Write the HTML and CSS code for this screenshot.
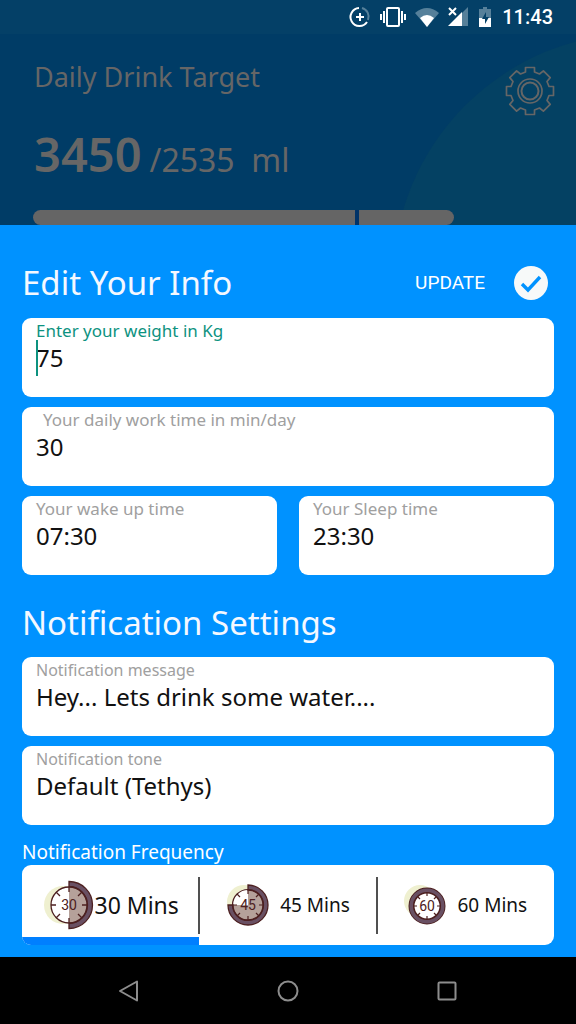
FILE: index.html
```html
<!DOCTYPE html>
<html lang="en">
<head>
<meta charset="utf-8">
<meta name="viewport" content="width=device-width, initial-scale=1">
<title>Edit Your Info</title>
<link rel="stylesheet" href="styles.css">
</head>
<body>
<div class="app">
  <section class="hero">
    <div class="statusbar">
      <svg width="22" height="22" viewBox="0 0 22 22" fill="none" stroke-width="2"><path d="M10 2A9 9 0 1 0 18 16" stroke="#fff"/><path d="M13 2A9 9 0 0 1 19 14" stroke="#56809a"/><path d="M11 7v8M7 11h8" stroke="#fff"/></svg>
      <svg width="26" height="22" viewBox="0 0 26 22" fill="none" stroke="#fff"><rect x="7" y="2" width="12" height="18" rx="1" stroke-width="2"/><path d="M4 5v12M22 5v12" stroke-width="2"/><path d="M1 8v6M25 8v6" stroke-width="2"/></svg>
      <svg width="24" height="22" viewBox="0 0 24 22"><path d="M0 7Q12-3 24 7L12 21z" fill="#56809a"/><path d="M5 12Q12 6 19 12L12 21z" fill="#fff"/></svg>
      <svg width="20" height="22" viewBox="0 0 20 22"><path d="M14 7l6-6v19h-6z" fill="#56809a"/><path d="M0 20L14 6v14z" fill="#fff"/><path d="M1 2l7 7M8 2L1 9" stroke="#fff" stroke-width="2"/></svg>
      <svg class="battery" width="12" height="22" viewBox="0 0 12 22"><path d="M0 3h4V1h4v2h4v9H0z" fill="#56809a"/><path d="M0 12h12v9H0z" fill="#fff"/><path d="M7 6l-4 7h3v5l4-7H7z" fill="#044067"/></svg>
      <time>11:43</time>
    </div>
    <div class="target">
      <div>
        <h2 class="target-title">Daily Drink Target</h2>
        <p class="amount"><strong>3450</strong><span>/2535&nbsp; ml</span></p>
      </div>
      <button class="settings" type="button" aria-label="Settings">
        <svg width="50" height="50" viewBox="-25 -25 50 50" fill="none" stroke="#666" stroke-width="1.7" stroke-linejoin="round"><path d="M-4.500-23.500H4.500V-19L9.500-17 13.400-20.200 20.200-13.400 17-9.500 19-4.500H23.500V4.500H19L17 9.500 20.200 13.400 13.400 20.200 9.500 17 4.500 19V23.500H-4.500V19L-9.500 17-13.400 20.200-20.200 13.400-17 9.500-19 4.500H-23.500V-4.500H-19L-17-9.500-20.200-13.400-13.400-20.200-9.500-17-4.500-19z"/><circle r="12"/><circle r="8.500" stroke-width="2"/></svg>
      </button>
    </div>
    <div class="progress"><span></span><span></span></div>
  </section>

  <main class="sheet">
    <header class="sheet-head">
      <h1>Edit Your Info</h1>
      <button class="update" type="button">
        <span>UPDATE</span>
        <svg width="34" height="34" viewBox="0 0 34 34"><circle cx="17" cy="17" r="17" fill="#f7f9f9"/><path d="M8 18l6 6L26 11" fill="none" stroke="#0092ff" stroke-width="3.4"/></svg>
      </button>
    </header>
    <div class="fields">
      <div class="field active"><label for="weight">Enter your weight in Kg</label><input id="weight" type="text" value="75"><i class="caret"></i></div>
      <div class="field"><label class="inset" for="work">Your daily work time in min/day</label><input id="work" type="text" value="30"></div>
      <div class="pair">
        <div class="field"><label for="wake">Your wake up time</label><input id="wake" type="text" value="07:30"></div>
        <div class="field"><label for="sleep">Your Sleep time</label><input id="sleep" type="text" value="23:30"></div>
      </div>
    </div>
    <h1 class="section">Notification Settings</h1>
    <div class="fields">
      <div class="field"><label for="message">Notification message</label><input id="message" type="text" value="Hey... Lets drink some water...."></div>
      <div class="field"><label for="tone">Notification tone</label><input id="tone" type="text" value="Default (Tethys)"></div>
    </div>
    <fieldset class="frequency">
      <legend>Notification Frequency</legend>
      <div class="options">
        <label class="option"><input type="radio" name="frequency" checked>
          <svg width="52" height="50" viewBox="0 0 52 50"><circle cx="20" cy="25" r="19" fill="#eff0d0"/><circle cx="26" cy="25" r="18" fill="#fff"/><path d="M26 7a18 18 0 0 1 0 36z" fill="#b5a19a"/><path d="M26 1.500a23.500 23.500 0 0 1 0 47v-5a18.500 18.500 0 0 0 0-37z" fill="#695063" stroke="#4d2020" stroke-width="1.300"/><g fill="none" stroke="#4d2020" stroke-width="1.300"><circle cx="26" cy="25" r="18"/><path d="M26 7v5M26 38v5M8 25h5M39 25h5M13 12l4 4M35 34l4 4M39 12l-4 4M17 34l-4 4"/></g><text x="26" y="30" text-anchor="middle">30</text></svg>
          <span>30 Mins</span></label>
        <label class="option"><input type="radio" name="frequency">
          <svg width="44" height="44" viewBox="0 0 44 44"><circle cx="18" cy="19" r="17" fill="#eff0d0"/><path d="M22 22H6A16 16 0 0 1 22 6z" fill="#fff"/><path d="M22 22V6a16 16 0 1 1-16 16z" fill="#b5a19a"/><path d="M22 2a20 20 0 1 1-20 20h5a15 15 0 1 0 15-15z" fill="#695063" stroke="#4d2020" stroke-width="1.300"/><g fill="none" stroke="#4d2020" stroke-width="1.200"><circle cx="22" cy="22" r="15.500"/><path d="M22 6v5M22 33v5M6 22h5M33 22h5M11 11l3 3M33 11l-3 3M11 33l3-3M33 33l-3-3"/></g><text x="22" y="27" text-anchor="middle">45</text></svg>
          <span>45 Mins</span></label>
        <label class="option"><input type="radio" name="frequency">
          <svg width="44" height="44" viewBox="0 0 44 44"><circle cx="17" cy="18" r="16" fill="#eff0d0"/><circle cx="24" cy="23" r="15.500" fill="#fff" stroke="#4d2020" stroke-width="6"/><circle cx="24" cy="23" r="15.800" fill="none" stroke="#695063" stroke-width="3.500"/><path d="M24 10v3M24 33v3M11 23h3M34 23h3M15 14l2 2M33 14l-2 2M15 32l2-2M33 32l-2-2" stroke="#4d2020" stroke-width="1.200"/><text x="24" y="28" text-anchor="middle">60</text></svg>
          <span>60 Mins</span></label>
      </div>
    </fieldset>
  </main>

  <nav class="navbar">
    <button type="button" aria-label="Back"><svg width="24" height="24" viewBox="0 0 24 24"><path d="M20 2.500v19L3 12z"/></svg></button>
    <button type="button" aria-label="Home"><svg width="24" height="24" viewBox="0 0 24 24"><circle cx="12" cy="12" r="9.500"/></svg></button>
    <button type="button" aria-label="Recent apps"><svg width="24" height="24" viewBox="0 0 24 24"><rect x="3.500" y="3.500" width="17" height="17" rx="1"/></svg></button>
  </nav>
</div>
</body>
</html>
```
FILE: styles.css
```css
* { box-sizing: border-box; }
body { margin: 0; background: #000; font-family: "Noto Sans", sans-serif; }
h1, h2, p { margin: 0; font-weight: 400; }
button { border: 0; padding: 0; background: none; color: inherit; font: inherit; }
svg { display: block; flex: none; }

.app { min-height: 100vh; display: flex; flex-direction: column; }

.hero { position: relative; overflow: hidden; background: #003c66; color: #666; }
.hero::before { content: ""; position: absolute; top: 33px; right: -311px; width: 494px; height: 494px; border-radius: 50%; background: #044163; }
.hero > * { position: relative; }
.statusbar { height: 34px; padding: 0 23px 0 0; background: #044067; color: #fff; display: flex; align-items: center; justify-content: flex-end; gap: 9px; }
.statusbar time { font: 500 20px/24px Roboto, sans-serif; }
.battery { margin: 0 2px; }
.target { padding: 26px 21px 0 34px; display: flex; justify-content: space-between; }
.target-title { font-size: 27px; line-height: 34px; }
.amount { margin-top: 32px; display: flex; align-items: baseline; gap: 8px; line-height: 56px; }
.amount strong { font-size: 47px; font-weight: 600; }
.amount span { font-size: 32px; }
.settings { align-self: flex-start; margin-top: 6px; }
.progress { margin: 22px 122px 0 33px; display: flex; gap: 4px; height: 15px; background: #003368; border-radius: 8px; overflow: hidden; }
.progress span { background: #656565; flex: 321; }
.progress span + span { flex: 95; }

.sheet { flex: 1; background: #0092ff; padding: 34px 22px 12px; color: #fff; }
.sheet-head { display: flex; justify-content: space-between; align-items: center; }
h1 { font-size: 33px; line-height: 48px; color: #f4f8ff; }
.update { display: flex; align-items: center; gap: 29px; margin-right: 6px; font: 19px/24px Roboto, sans-serif; }
.fields { display: grid; gap: 10px; margin-top: 11px; }
.pair { display: grid; grid-template-columns: 1fr 1fr; gap: 22px; }
.field { position: relative; min-width: 0; padding: 3px 14px 22px; background: #fff; border-radius: 9px; }
.field label { display: block; font-size: 17px; line-height: 20px; color: #a0a0a0; }
.field .inset { padding-left: 7px; }
.field input { display: block; width: 100%; height: 34px; padding: 0; border: 0; outline: 0; background: none; font: 24px/34px "Noto Sans", sans-serif; color: #111; }
.field.active label { color: #0d927f; }
.caret { position: absolute; left: 14px; top: 22px; width: 2px; height: 36px; background: #0d927f; }
.section { margin-top: 24px; }
.section + .fields { margin-top: 10px; }
.section + .fields label { font-size: 16px; }

.frequency { margin: 14px 0 0; padding: 0; border: 0; min-width: 0; }
.frequency legend { padding: 0; font-size: 19px; line-height: 26px; }
.options { display: grid; grid-template-columns: repeat(3, 1fr); background: #fff; border-radius: 9px; overflow: hidden; }
.option { position: relative; height: 80px; display: flex; align-items: center; justify-content: center; gap: 10px; font-size: 19px; color: #111; }
.option input { position: absolute; opacity: 0; }
.option:has(:checked) { gap: 0; font-size: 23px; border-bottom: 8px solid #007fff; padding-top: 8px; }
.option + .option::before { content: ""; position: absolute; left: -1px; top: 12px; width: 2px; height: 57px; background: #505050; }
.option text { font-size: 14px; font-family: Roboto, sans-serif; fill: #4d2020; }

.navbar { height: 67px; background: #000; display: flex; justify-content: center; align-items: center; gap: 135px; }
.navbar svg { fill: none; stroke: #8d8d8d; stroke-width: 2; stroke-linejoin: round; }
```
